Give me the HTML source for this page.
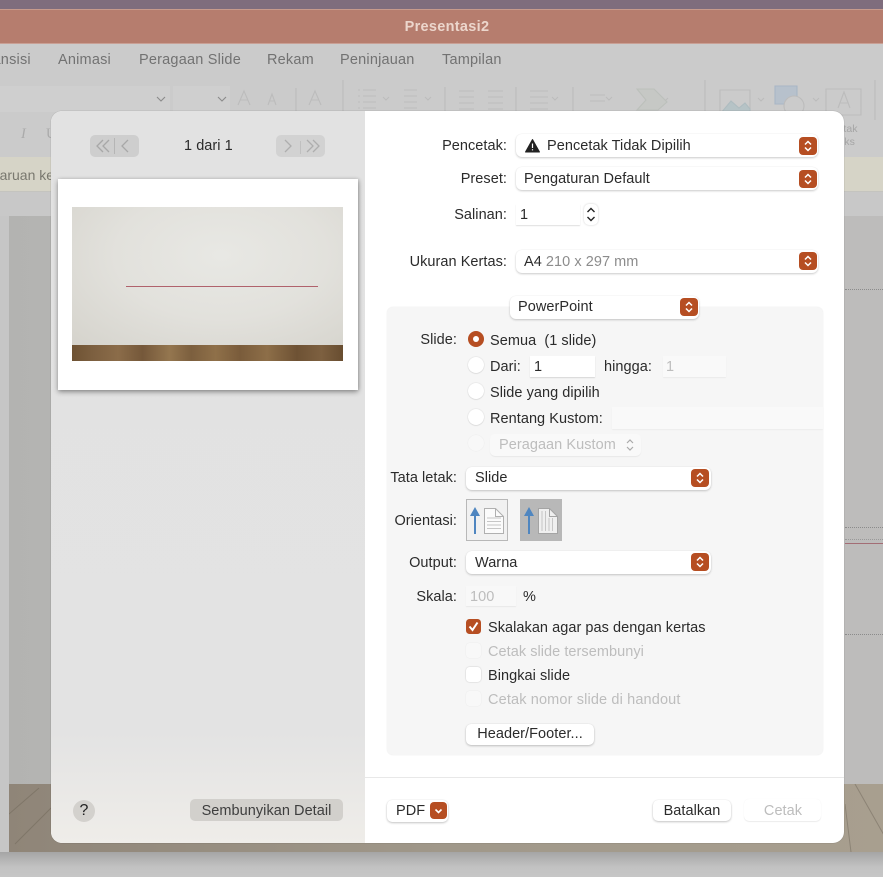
<!DOCTYPE html>
<html lang="id"><head><meta charset="utf-8"><title>Presentasi2</title>
<style>
*{box-sizing:border-box}
html,body{margin:0;padding:0}
body{width:883px;height:877px;position:relative;overflow:hidden;background:#c6c6c6;font-family:"Liberation Sans",sans-serif;font-size:14.5px;letter-spacing:.05px;color:#2b2b2b}
.a{position:absolute}
.t{position:absolute;white-space:nowrap;line-height:18px;height:18px;margin-top:1px}
.r{text-align:right}
.dim{color:#bdbdbd}
.pop{position:absolute;background:#fff;border-radius:6px;box-shadow:0 1px 2px rgba(0,0,0,.2),0 0 1px rgba(0,0,0,.08);height:23px}
.st{position:absolute;width:18px;height:18px;border-radius:4px;background:#b64e22}
.st svg{position:absolute;left:0;top:0}
.rad{position:absolute;width:16px;height:16px;border-radius:50%;background:#fff;box-shadow:0 0 1.5px rgba(0,0,0,.18),0 1px 1px rgba(0,0,0,.06)}
.chk{position:absolute;width:15px;height:15px;border-radius:3.5px;background:#fff;box-shadow:0 0 1.5px rgba(0,0,0,.25)}
.off{box-shadow:0 0 1px rgba(0,0,0,.1);background:#f8f8f8}
.fld{position:absolute;background:#fff;box-shadow:0 1px 1px rgba(0,0,0,.13)}
.btn{position:absolute;background:#fff;border-radius:5px;box-shadow:0 1px 2px rgba(0,0,0,.22),0 0 1px rgba(0,0,0,.12);text-align:center}
.menu{color:#727272;font-size:14.5px;letter-spacing:.2px;top:50px}
</style></head><body>

<!-- background app -->
<div class="a" style="left:0;top:0;width:883px;height:9px;background:#7f6d7d"></div>
<div class="a" style="left:0;top:9px;width:883px;height:35px;background:#b67d6e;border-top:1px solid #c79a8c;border-bottom:1px solid #c9a095"></div>
<div class="t" style="left:0;width:894px;text-align:center;top:17px;color:#ecd6cc;font-weight:700;font-size:14.5px;letter-spacing:.3px">Presentasi2</div>
<div class="a" style="left:0;top:44px;width:883px;height:113px;background:#cbcbcb"></div>
<div class="t menu" style="left:-21px">Transisi</div>
<div class="t menu" style="left:58px">Animasi</div>
<div class="t menu" style="left:139px">Peragaan Slide</div>
<div class="t menu" style="left:267px">Rekam</div>
<div class="t menu" style="left:340px">Peninjauan</div>
<div class="t menu" style="left:442px">Tampilan</div>

<!-- ribbon hints -->
<div class="a" style="left:0;top:86px;width:170px;height:26px;background:#cfcfcf"></div>
<div class="a" style="left:173px;top:86px;width:57px;height:26px;background:#cfcfcf"></div>
<svg class="a" style="left:0;top:80px" width="883" height="80" fill="none" stroke="#bcbcbc" stroke-width="1.1">
<path d="M157 17l4 4 4-4M218 17l4 4 4-4" stroke="#8a8a8a"/>
<path d="M238 25l6-14 6 14M240.500 20h7M268 25l4-11 4 11M270 21h4M309 25l6-14 6 14M311.500 20h7"/>
<path d="M296 8v24M343 0v32M445 7v25M516 7v25M573 7v25M705 0v40M875 0v40"/>
<path d="M363 10h13M363 16h13M363 22h13M363 28h13M358 10h2M358 16h2M358 22h2M358 28h2M404 10h13M404 16h13M404 22h13M404 28h13"/>
<path d="M383 17l3 3 3-3M425 17l3 3 3-3M552 17l3 3 3-3M606 17l3 3 3-3M662 18l3 3 3-3M758 18l3 3 3-3M813 18l3 3 3-3"/>
<path d="M459 11h15M459 17h15M459 23h15M459 29h15M488 11h15M488 17h15M488 23h15M488 29h15"/>
<path d="M530 11h18M530 17h18M530 23h18M530 29h18M590 15h15M590 21h15"/>
<path d="M637 9h17l13 13-9 8h-21l9-10z" fill="#c6c8c5" stroke="#bcc0bb"/>
<path d="M720 10h30v24h-30z"/><path d="M721 33l10-12 8 7 6-5 5 6v4z" fill="#b6c3c6" stroke="#aebcc0"/>
<path d="M775 6h22v18h-22z" stroke="#a8b6c6" fill="#b7c1cc"/>
<circle cx="794" cy="26" r="10" fill="#cbcbcb"/>
<path d="M826 9h35v26h-35zM838 28l6-16 6 16M840.500 23h7"/>
</svg>
<div class="t" style="left:824px;top:122px;color:#a5a5a5;font-size:10.5px;line-height:13px;width:40px;text-align:center">Kotak</div>
<div class="t" style="left:824px;top:135px;color:#a5a5a5;font-size:10.5px;line-height:13px;width:40px;text-align:center">Teks</div>
<div class="t" style="left:21px;top:124px;color:#aaa;font-style:italic;font-family:'Liberation Serif',serif">I</div>
<div class="t" style="left:46px;top:124px;color:#aaa;font-family:'Liberation Serif',serif">U</div>

<!-- notification bar -->
<div class="a" style="left:0;top:157px;width:883px;height:35px;background:#d6d4c7;border-bottom:1px solid #c4c4bf"></div>
<div class="t" style="left:-37px;top:165px;color:#79786f;font-size:14px;letter-spacing:0">Pembaruan keamanan</div>
<div class="a" style="left:0;top:192px;width:883px;height:24px;background:#c8c8c8"></div>

<!-- document area -->
<div class="a" style="left:9px;top:216px;width:874px;height:568px;background:linear-gradient(90deg,#b3b3b1,#bdbdbb 50%,#bdbcbb)"></div>
<div class="a" style="left:845px;top:289px;width:38px;border-top:1px dotted #8b8b8b"></div>
<div class="a" style="left:845px;top:527px;width:38px;border-top:1px dotted #8b8b8b"></div>
<div class="a" style="left:845px;top:539px;width:38px;height:4px;border-top:1px dotted #999"></div>
<div class="a" style="left:845px;top:543px;width:38px;height:1px;background:#a36d75"></div>
<div class="a" style="left:845px;top:634px;width:38px;border-top:1px dotted #8b8b8b"></div>
<div class="a" style="left:9px;top:784px;width:874px;height:68px;background:linear-gradient(90deg,#8f8578,#a0988a 50%,#a89f8f)"></div>
<svg class="a" style="left:845px;top:784px" width="38" height="68" fill="none" stroke="#8c8375"><path d="M10 0l34 60M0 20l6 48"/></svg>
<svg class="a" style="left:9px;top:784px" width="42" height="68" fill="none" stroke="#7f7668"><path d="M0 30L30 4M6 60L42 24"/></svg>
<div class="a" style="left:0;top:852px;width:883px;height:25px;background:linear-gradient(#a5a5a5,#c2c2c2 60%,#c6c6c6)"></div>

<!-- dialog -->
<div class="a" style="left:51px;top:111px;width:793px;height:732px;border-radius:11px;background:#fff;overflow:hidden;box-shadow:0 0 1px rgba(0,0,0,.35)">
  <div class="a" style="left:0;top:0;width:314px;height:732px;background:linear-gradient(#e2e2e2 0,#e3e3e3 85%,#efede9 100%)"></div>
</div>

<!-- left nav -->
<div class="a" style="left:90px;top:135px;width:49px;height:22px;border-radius:5px;background:#cecece"></div>
<div class="a" style="left:276px;top:135px;width:49px;height:22px;border-radius:5px;background:#d2d2d2"></div>
<svg class="a" style="left:90px;top:135px" width="49" height="22" fill="none" stroke="#a8a8a8" stroke-width="1.3">
<path d="M13 5l-6 6 6 6M19 5l-6 6 6 6M38 5l-6 6 6 6"/><path d="M24.500 3v16" stroke="#b5b5b5" stroke-width="1"/></svg>
<svg class="a" style="left:276px;top:135px" width="49" height="22" fill="none" stroke="#aeaeae" stroke-width="1.3">
<path d="M9 5l6 6-6 6M31 5l6 6-6 6M37 5l6 6-6 6"/><path d="M24.500 6v13" stroke="#c0c0c0" stroke-width="1"/></svg>
<div class="t" style="left:184px;top:136px">1 dari 1</div>

<!-- preview page -->
<div class="a" style="left:58px;top:179px;width:300px;height:211px;background:#fff;box-shadow:0 2px 5px rgba(0,0,0,.38),1px 0 3px rgba(0,0,0,.12)"></div>
<div class="a" style="left:72px;top:207px;width:271px;height:138px;background:radial-gradient(ellipse at 55% 35%,#e8e8e4 0,#e2e1dc 50%,#d5d3cc 100%)"></div>
<div class="a" style="left:72px;top:345px;width:271px;height:16px;background:linear-gradient(90deg,#6e5233 0,#7d6040 8%,#8b6c49 17%,#75583a 26%,#94764f 36%,#7c5f3e 44%,#8f7049 53%,#7a5c3b 62%,#8d6e48 72%,#6e5234 83%,#7d6040 92%,#684d30 100%)"></div>
<div class="a" style="left:126px;top:285.500px;width:192px;height:1.400px;background:#b0626c"></div>

<!-- left bottom -->
<div class="a" style="left:73px;top:800px;width:22px;height:22px;border-radius:50%;background:#d3d1cd"></div>
<div class="t" style="left:73px;top:801px;width:22px;text-align:center;font-size:16px;color:#222">?</div>
<div class="a" style="left:190px;top:799px;width:153px;height:22px;border-radius:5px;background:#d2d0cc"></div>
<div class="t" style="left:190px;top:801px;width:153px;text-align:center;color:#3e3e3e">Sembunyikan Detail</div>

<!-- right top -->
<div class="t r" style="left:380px;width:127px;top:136px">Pencetak:</div>
<div class="t r" style="left:380px;width:127px;top:169px">Preset:</div>
<div class="t r" style="left:380px;width:127px;top:205px">Salinan:</div>
<div class="t r" style="left:380px;width:127px;top:252px">Ukuran Kertas:</div>

<div class="pop" style="left:516px;top:134px;width:302px"></div>
<svg class="a" style="left:525px;top:138px" width="16" height="16"><path d="M7.500 1.500L14.500 14H.5z" fill="#222" stroke="#222" stroke-linejoin="round"/><path d="M7.500 5.500v4.500M7.500 11.200v1.200" stroke="#fff" stroke-width="1.200"/></svg>
<div class="t" style="left:547px;top:136px">Pencetak Tidak Dipilih</div>
<div class="st" style="left:799px;top:137px"><svg width="18" height="18" fill="none" stroke="#fff" stroke-width="1.500"><path d="M6 7.500l3-3 3 3M6 10.500l3 3 3-3"/></svg></div>

<div class="pop" style="left:516px;top:167px;width:302px"></div>
<div class="t" style="left:524px;top:169px">Pengaturan Default</div>
<div class="st" style="left:799px;top:170px"><svg width="18" height="18" fill="none" stroke="#fff" stroke-width="1.500"><path d="M6 7.500l3-3 3 3M6 10.500l3 3 3-3"/></svg></div>

<div class="fld" style="left:516px;top:204px;width:64px;height:21px"></div>
<div class="t" style="left:520px;top:205px">1</div>
<div class="a" style="left:584px;top:204px;width:14px;height:21px;border-radius:5px;background:#fff;box-shadow:0 0 2px rgba(0,0,0,.2)"></div>
<svg class="a" style="left:584px;top:204px" width="14" height="21" fill="none" stroke="#222" stroke-width="1.400"><path d="M3.500 8l3.500-3.500 3.500 3.500M3.500 13l3.500 3.500 3.500-3.500"/></svg>

<div class="pop" style="left:516px;top:250px;width:302px"></div>
<div class="t" style="left:524px;top:252px">A4 <span style="color:#8c8c8c">210 x 297 mm</span></div>
<div class="st" style="left:799px;top:252px"><svg width="18" height="18" fill="none" stroke="#fff" stroke-width="1.500"><path d="M6 7.500l3-3 3 3M6 10.500l3 3 3-3"/></svg></div>

<!-- group box -->
<div class="a" style="left:387px;top:307px;width:436px;height:448px;background:#f6f6f6;border-radius:6px;box-shadow:0 0 1px rgba(0,0,0,.12)"></div>

<div class="pop" style="left:510px;top:296px;width:189px"></div>
<div class="t" style="left:518px;top:297px">PowerPoint</div>
<div class="st" style="left:680px;top:298px"><svg width="18" height="18" fill="none" stroke="#fff" stroke-width="1.500"><path d="M6 7.500l3-3 3 3M6 10.500l3 3 3-3"/></svg></div>

<div class="t r" style="left:380px;width:77px;top:330px">Slide:</div>
<div class="rad" style="left:468px;top:331px;background:#b64e22;box-shadow:none"></div>
<div class="a" style="left:473px;top:336px;width:6px;height:6px;border-radius:50%;background:#fff"></div>
<div class="t" style="left:490px;top:331px">Semua&nbsp; (1 slide)</div>

<div class="rad" style="left:468px;top:357px"></div>
<div class="t" style="left:490px;top:357px">Dari:</div>
<div class="fld" style="left:530px;top:356px;width:65px;height:21px"></div>
<div class="t" style="left:534px;top:357px">1</div>
<div class="t" style="left:604px;top:357px">hingga:</div>
<div class="fld" style="left:663px;top:356px;width:63px;height:21px;background:#f9f9f9;box-shadow:0 1px 1px rgba(0,0,0,.05)"></div>
<div class="t dim" style="left:666px;top:357px">1</div>

<div class="rad" style="left:468px;top:383px"></div>
<div class="t" style="left:490px;top:383px">Slide yang dipilih</div>

<div class="rad" style="left:468px;top:409px"></div>
<div class="t" style="left:490px;top:409px">Rentang Kustom:</div>
<div class="fld" style="left:612px;top:407px;width:211px;height:22px;background:#f9f9f9;box-shadow:0 1px 1px rgba(0,0,0,.04)"></div>

<div class="rad" style="left:468px;top:435px;background:#f8f8f8;box-shadow:0 0 1px rgba(0,0,0,.1)"></div>
<div class="a" style="left:490px;top:434px;width:151px;height:22px;border-radius:5px;background:#f9f9f9;box-shadow:0 1px 1px rgba(0,0,0,.06)"></div>
<div class="t dim" style="left:499px;top:435px">Peragaan Kustom</div>
<svg class="a" style="left:624px;top:437px" width="12" height="16" fill="none" stroke="#aaa" stroke-width="1.200"><path d="M3 6l3-3 3 3M3 10l3 3 3-3"/></svg>

<div class="t r" style="left:380px;width:77px;top:468px">Tata letak:</div>
<div class="pop" style="left:466px;top:467px;width:245px"></div>
<div class="t" style="left:475px;top:468px">Slide</div>
<div class="st" style="left:691px;top:469px"><svg width="18" height="18" fill="none" stroke="#fff" stroke-width="1.500"><path d="M6 7.500l3-3 3 3M6 10.500l3 3 3-3"/></svg></div>

<div class="t r" style="left:380px;width:77px;top:511px">Orientasi:</div>
<div class="a" style="left:466px;top:499px;width:42px;height:42px;background:#f1f1f1;border:1px solid #b8b8b8"></div>
<div class="a" style="left:520px;top:499px;width:42px;height:42px;background:#b8b8b8"></div>
<svg class="a" style="left:466px;top:499px" width="96" height="42" fill="none">
<path d="M9 35V14" stroke="#4f86c0" stroke-width="2"/><path d="M4 17L9 8l5 9z" fill="#4f86c0"/>
<path d="M18.500 9.500h11l8 8v17h-19z" fill="#fbfbfb" stroke="#b0b0b0"/><path d="M29.500 9.500v8h8" stroke="#b0b0b0"/>
<path d="M21 19h14M21 22.500h14M21 26h14M21 29.500h14" stroke="#c6c6c6"/>
<path d="M63 35V14" stroke="#4f86c0" stroke-width="2"/><path d="M58 17l5-9 5 9z" fill="#4f86c0"/>
<path d="M72.500 9.500h11l8 8v17h-19z" fill="#efefef" stroke="#a4a4a4"/><path d="M83.500 9.500v8h8" stroke="#a4a4a4"/>
<path d="M76 12v20M79.500 12v20M83 19v13M86.500 19v13" stroke="#c6c6c6"/>
</svg>

<div class="t r" style="left:380px;width:77px;top:553px">Output:</div>
<div class="pop" style="left:466px;top:551px;width:245px"></div>
<div class="t" style="left:475px;top:553px">Warna</div>
<div class="st" style="left:691px;top:553px"><svg width="18" height="18" fill="none" stroke="#fff" stroke-width="1.500"><path d="M6 7.500l3-3 3 3M6 10.500l3 3 3-3"/></svg></div>

<div class="t r" style="left:380px;width:77px;top:587px">Skala:</div>
<div class="fld" style="left:466px;top:586px;width:50px;height:20px;background:#f8f8f8;box-shadow:0 1px 1px rgba(0,0,0,.06)"></div>
<div class="t dim" style="left:470px;top:587px">100</div>
<div class="t" style="left:523px;top:587px">%</div>

<div class="chk" style="left:466px;top:619px;background:#b64e22;box-shadow:none"></div>
<svg class="a" style="left:466px;top:619px" width="15" height="15" fill="none" stroke="#fff" stroke-width="2"><path d="M3.500 7.500l3 3.500 5-7.500"/></svg>
<div class="t" style="left:488px;top:618px">Skalakan agar pas dengan kertas</div>
<div class="chk off" style="left:466px;top:643px"></div>
<div class="t dim" style="left:488px;top:642px">Cetak slide tersembunyi</div>
<div class="chk" style="left:466px;top:667px"></div>
<div class="t" style="left:488px;top:666px">Bingkai slide</div>
<div class="chk off" style="left:466px;top:691px"></div>
<div class="t dim" style="left:488px;top:690px;letter-spacing:.14px">Cetak nomor slide di handout</div>

<div class="btn" style="left:466px;top:724px;width:128px;height:21px"></div>
<div class="t" style="left:466px;top:724px;width:128px;text-align:center">Header/Footer...</div>

<!-- footer -->
<div class="a" style="left:365px;top:777px;width:479px;height:1px;background:#e8e8e8"></div>
<div class="btn" style="left:387px;top:800px;width:61px;height:22px"></div>
<div class="t" style="left:396px;top:801px">PDF</div>
<div class="st" style="left:430px;top:802px;height:17px;width:17px"><svg width="17" height="17" fill="none" stroke="#fff" stroke-width="1.600"><path d="M5.500 7.500l3 3 3-3"/></svg></div>
<div class="btn" style="left:653px;top:800px;width:78px;height:21px"></div>
<div class="t" style="left:653px;top:801px;width:78px;text-align:center">Batalkan</div>
<div class="btn" style="left:744px;top:799px;width:77px;height:22px;box-shadow:0 1px 1px rgba(0,0,0,.07),0 0 1px rgba(0,0,0,.06)"></div>
<div class="t dim" style="left:744px;top:801px;width:78px;text-align:center">Cetak</div>

</body></html>
